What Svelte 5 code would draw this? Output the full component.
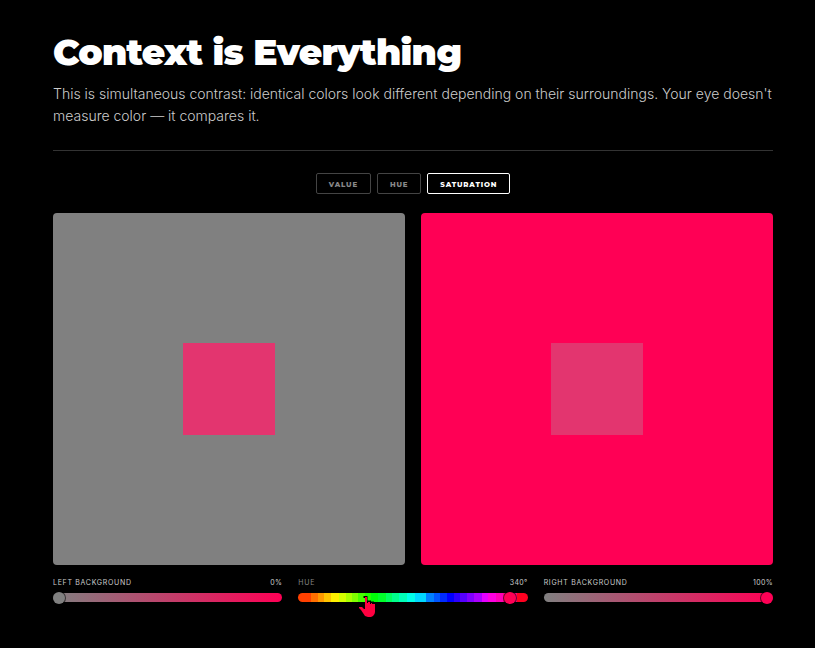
<script>
  const modes = ["Value", "Hue", "Saturation"];

  let mode = "Saturation";
  let left = 0;
  let hue = 340;
  let right = 100;

  const bands = [
    ["#ff4000", 0, 13],
    ["#ff6f00", 13, 20],
    ["#ff9900", 20, 26],
    ["#ffc400", 26, 33],
    ["#fff000", 33, 41],
    ["#d5ff00", 41, 48],
    ["#aaff00", 48, 54],
    ["#80ff00", 54, 60],
    ["#48ff00", 60, 67],
    ["#22ff00", 67, 73],
    ["#00ff08", 73, 80],
    ["#00ff2b", 80, 88],
    ["#00ff60", 88, 94],
    ["#00ff8c", 94, 101],
    ["#00ffb7", 101, 109],
    ["#00ffe8", 109, 117],
    ["#00d8ff", 117, 128],
    ["#0080ff", 128, 136],
    ["#0055ff", 136, 142],
    ["#002bff", 142, 149],
    ["#0000ff", 149, 156],
    ["#2b00ff", 156, 162],
    ["#5500ff", 162, 169],
    ["#8000ff", 169, 176],
    ["#aa00ff", 176, 184],
    ["#e600ff", 184, 190],
    ["#ff00e0", 190, 198],
    ["#ff00b8", 198, 205],
    ["#ff0080", 205, 219],
    ["#ff0020", 219, 230],
  ];

  const pct = x => ((x / 230) * 100).toFixed(2) + "%";
  const hueTrack = bands
    .map(([color, from, to]) => `${color} ${pct(from)} ${pct(to)}`)
    .join(", ");

  $: pure = `hsl(${hue}, 100%, 50%)`;
  $: leftColor = `hsl(${hue}, ${left}%, 50%)`;
  $: rightColor = `hsl(${hue}, ${right}%, 50%)`;
  $: swatch = `hsl(${hue}, 76%, 55%)`;
  $: satTrack = `linear-gradient(to right, #808080, ${pure})`;
</script>

<main>
  <header>
    <h1>Context is Everything</h1>
    <p>
      This is simultaneous contrast: identical colors look different depending
      on their surroundings. Your eye doesn't measure color — it compares it.
    </p>
  </header>

  <div class="modes">
    {#each modes as name}
      <button class:active={mode === name} on:click={() => (mode = name)}>
        {name}
      </button>
    {/each}
  </div>

  <div class="panels">
    <div class="panel" style="background: {leftColor}">
      <div class="swatch" style="background: {swatch}"></div>
    </div>
    <div class="panel" style="background: {rightColor}">
      <div class="swatch" style="background: {swatch}"></div>
    </div>
  </div>

  <div class="controls">
    <div class="control">
      <div class="caption">
        <label for="left">Left background</label>
        <output for="left">{left}%</output>
      </div>
      <input
        id="left"
        type="range"
        min="0"
        max="100"
        bind:value={left}
        style="--track: {satTrack}; --thumb: {leftColor}" />
    </div>
    <div class="control hue">
      <div class="caption">
        <label for="hue">Hue</label>
        <output for="hue">{hue}°</output>
      </div>
      <input
        id="hue"
        type="range"
        min="0"
        max="360"
        bind:value={hue}
        style="--track: linear-gradient(to right, {hueTrack}); --thumb: {pure}" />
      <svg class="pointer" viewBox="0 0 17 22" width="17" height="22" aria-hidden="true">
        <path class="outline" d="M5.5 2V0.5H7.5V5.5H11V6.5H14V7.5H16" />
        <path
          d="M6 1H8V7H9V6H11V8H12V7H13V8H14V8H16V16Q16 18 14 20L12 21H9L6 20L4 17L2 14L0 12V11H3L5 13H6Z" />
      </svg>
    </div>
    <div class="control">
      <div class="caption">
        <label for="right">Right background</label>
        <output for="right">{right}%</output>
      </div>
      <input
        id="right"
        type="range"
        min="0"
        max="100"
        bind:value={right}
        style="--track: {satTrack}; --thumb: {rightColor}" />
    </div>
  </div>
</main>

<style>
  :global(body) {
    background: #000;
  }
  main {
    padding: 30px 42px 42px 53px;
    font-family: Inter, "Liberation Sans", sans-serif;
    color: #ccc;
  }
  header {
    border-bottom: 1px solid #333;
    padding-bottom: 23px;
  }
  h1 {
    margin: 0;
    font-family: Montserrat, Inter, sans-serif;
    font-size: 36px;
    font-weight: 900;
    line-height: 44px;
    letter-spacing: -0.02em;
    color: #fff;
  }
  p {
    margin: 9px 0 0;
    font-size: 14px;
    font-weight: 300;
    line-height: 22px;
  }
  .modes {
    display: flex;
    justify-content: center;
    gap: 6px;
    margin: 22px 0 19px;
  }
  button {
    height: 21px;
    padding: 1px 12px 0;
    border: 1px solid #444;
    border-radius: 2px;
    background: none;
    color: #888;
    font-family: Montserrat, Inter, sans-serif;
    font-size: 7px;
    font-weight: 800;
    letter-spacing: 0.12em;
    text-transform: uppercase;
    cursor: pointer;
  }
  button.active {
    border-color: #fff;
    color: #fff;
  }
  .panels {
    display: grid;
    grid-template-columns: 1fr 1fr;
    gap: 16px;
  }
  .panel {
    display: flex;
    align-items: center;
    justify-content: center;
    aspect-ratio: 1;
    border-radius: 4px;
  }
  .swatch {
    width: 26%;
    aspect-ratio: 1;
  }
  .controls {
    display: grid;
    grid-template-columns: repeat(3, 1fr);
    gap: 16px;
    margin-top: 12px;
  }
  .control {
    position: relative;
  }
  .caption {
    display: flex;
    justify-content: space-between;
    font-size: 7px;
    line-height: 12px;
    letter-spacing: 0.1em;
    text-transform: uppercase;
  }
  .caption output {
    letter-spacing: 0.05em;
  }
  .hue label {
    color: #888;
  }
  input {
    display: block;
    width: 100%;
    height: 12px;
    margin: 2px 0 0;
    appearance: none;
    background: none;
    cursor: pointer;
  }
  input::-webkit-slider-runnable-track {
    height: 9px;
    border-radius: 5px;
    background: var(--track);
  }
  input::-webkit-slider-thumb {
    appearance: none;
    width: 12px;
    height: 12px;
    margin-top: -1px;
    border-radius: 50%;
    background: var(--thumb);
    box-shadow: 0 0 0 1px rgba(0, 0, 0, 0.6);
  }
  .pointer {
    position: absolute;
    top: 19px;
    left: 61px;
    fill: #ff0040;
    pointer-events: none;
  }
  .outline {
    fill: none;
    stroke: #000;
    stroke-width: 2;
  }
</style>
